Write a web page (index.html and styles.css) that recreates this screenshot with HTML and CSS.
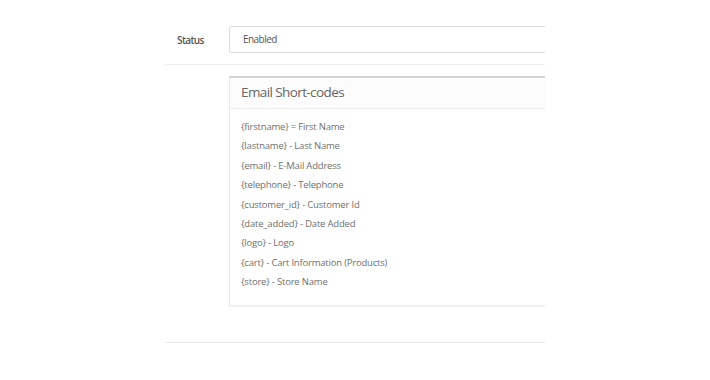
FILE: index.html
```html
<!DOCTYPE html>
<html>
<head>
<meta charset="utf-8">
<link rel="stylesheet" href="styles.css">
</head>
<body>
<div class="page">
  <div class="frame">
    <div class="row status-row">
      <label class="label">Status</label>
      <div class="field">
        <div class="select">Enabled</div>
      </div>
    </div>
    <div class="row panel-row">
      <div class="label"></div>
      <div class="field">
        <div class="panel">
          <div class="panel-head">Email Short-codes</div>
          <ul class="codes">
            <li>{firstname} = First Name</li>
            <li>{lastname} - Last Name</li>
            <li>{email} - E-Mail Address</li>
            <li>{telephone} - Telephone</li>
            <li>{customer_id} - Customer Id</li>
            <li>{date_added} - Date Added</li>
            <li>{logo} - Logo</li>
            <li>{cart} - Cart Information (Products)</li>
            <li>{store} - Store Name</li>
          </ul>
        </div>
      </div>
    </div>
  </div>
</div>
</body>
</html>
```
FILE: styles.css
```css
html, body {
  margin: 0;
  padding: 0;
  background: #fff;
}
body {
  font-family: "Open Sans", "Liberation Sans", sans-serif;
  color: #666;
}
.page {
  padding-left: 165px;
  padding-top: 26px;
}
.frame {
  width: 380px;
  overflow: hidden;
}
.row {
  display: flex;
}
.label {
  width: 64px;
  flex: none;
  box-sizing: border-box;
  padding-left: 12px;
  font-size: 10px;
  font-weight: 600;
  letter-spacing: -0.6px;
  color: #555;
}
.field {
  flex: 1;
  min-width: 0;
}
.status-row {
  align-items: center;
  padding-bottom: 11px;
  border-bottom: 1px solid #eeeeee;
}
.select {
  box-sizing: border-box;
  width: 400px;
  height: 27px;
  border: 1px solid #dcdcdc;
  border-radius: 2px;
  padding-left: 13px;
  font-size: 10px;
  letter-spacing: -0.55px;
  line-height: 25px;
  color: #555;
}
.panel-row {
  padding-top: 11px;
  padding-bottom: 36px;
  border-bottom: 1px solid #e8e8e8;
}
.panel {
  width: 400px;
  border: 1px solid #eaeaea;
  border-top: 2px solid #d2d2d2;
  box-shadow: 0 1px 1px rgba(0,0,0,0.04);
}
.panel-head {
  height: 30px;
  line-height: 28px;
  padding-left: 11px;
  font-size: 13.5px;
  letter-spacing: -0.6px;
  color: #666;
  background: #fcfcfc;
  border-bottom: 1px solid #ececec;
}
.codes {
  list-style: none;
  margin: 0;
  padding: 8px 0 13px 11px;
}
.codes li {
  font-size: 9.5px;
  letter-spacing: -0.2px;
  line-height: 19.4px;
  color: #707070;
}
```
